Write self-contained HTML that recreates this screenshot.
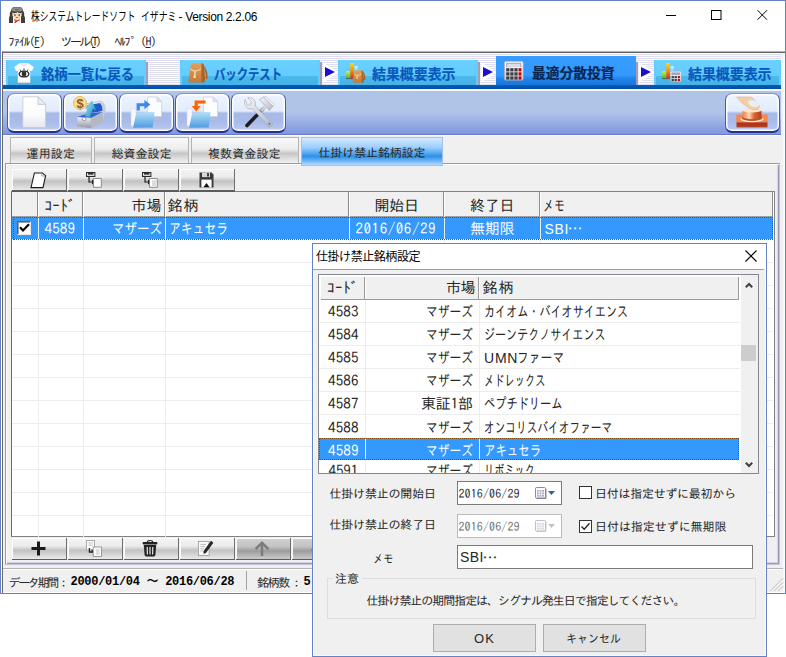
<!DOCTYPE html>
<html lang="ja">
<head>
<meta charset="utf-8">
<title>株システムトレードソフト イザナミ</title>
<style>
*{box-sizing:border-box;margin:0;padding:0}
html,body{width:786px;height:657px;overflow:hidden;background:#fff}
body{position:relative;font-family:"Liberation Sans","IPAGothic","Noto Sans CJK JP",sans-serif;font-size:13px;color:#000}
.a{position:absolute}
.t{position:absolute;white-space:nowrap;line-height:1}
.ui{font-family:"Liberation Sans","Noto Sans CJK JP",sans-serif}
.go{font-family:"IPAGothic","Noto Sans CJK JP",sans-serif;color:#262626}
.lgo{font-family:"Liberation Sans","IPAGothic",sans-serif;color:#262626}
.mono{font-family:"Liberation Mono","IPAGothic",monospace}
.w{color:#fff}
.bk{font-family:"Liberation Sans","Noto Sans CJK JP",sans-serif;font-weight:700;color:#0858bc;-webkit-text-stroke:0.2px currentColor}

svg{position:absolute;overflow:visible}
/* main window */
#win{position:absolute;left:0;top:0;width:786px;height:594px;background:#fff;border:1px solid #6482c4}
#client{position:absolute;left:2px;top:51px;width:783px;height:542px;background:#f0f0f0;border-left:1px solid #686868;border-top:1px solid #b4b4b4;box-shadow:inset 0 1px 0 #646464,inset -1.5px 0 0 #fff,inset 0 -1px 0 #fff}
#strip{position:absolute;left:3px;top:53px;width:778px;height:32px;background:repeating-linear-gradient(180deg,#fbfbfd 0,#fbfbfd 1px,#dedeec 1px,#dedeec 2px)}
.tab{position:absolute;top:60px;height:25px;background:linear-gradient(180deg,#6ad0ff 0,#64ccff 62%,#4cb9ea 66%,#46b2e6 100%);box-shadow:inset 2px 0 0 #66ccff,inset -2px 0 0 #66ccff}
.tab.on{top:56px;height:29px;background:linear-gradient(180deg,#379dff 0,#3399ff 66%,#2183ea 78%,#1876dc 100%);box-shadow:none}
.tsh{position:absolute;top:62px;width:2px;height:23px;background:#a39eb4}
#bluebar{position:absolute;left:3px;top:85px;width:778px;height:4px;background:linear-gradient(180deg,#0a5cbc,#004ca8)}
#tool{position:absolute;left:3px;top:89px;width:778px;height:47px;background:linear-gradient(180deg,#f8f6f6 0,#f8f6f6 2px,#b0c4e8 2px,#b0c4e8 23px,#8098e0 44.5px,#6a7ac4 44.5px,#6a7ac4 46px,#fbfbfb 46px)}
.tb{position:absolute;top:93px;width:55px;height:40px;border-radius:7px;border:1px solid #4a5aa8;border-top-color:#7e92d0;border-bottom:2px solid #26328a;background:linear-gradient(180deg,#eef4ff 0,#e2ecfd 46%,#a6b9e7 52%,#a9bbe9 75%,#bccaf2 100%);box-shadow:inset 0 0 0 1.5px #fff}
.arrow{position:absolute;top:66.5px;width:0;height:0;border-left:10px solid #1a10d0;border-top:5.5px solid transparent;border-bottom:5.5px solid transparent}
.arrbg{position:absolute;top:62px;width:15px;height:21px;background:#fff;clip-path:polygon(0 0,100% 50%,0 100%)}
/* sub tabs */
.stab{position:absolute;top:137px;height:26px;border:1px solid #b4b4b4;border-bottom:none;background:linear-gradient(180deg,#fafafa 0,#ececec 45%,#c6c6c6 62%,#dcdcdc 80%,#f2f2f2 100%)}
.stab.on{height:29px;border:1px solid #9ec4ea;background:linear-gradient(180deg,#d4eaff 0,#9dcefc 35%,#2d90e8 68%,#6db6f6 85%,#b4dcff 100%)}
#panel{position:absolute;left:5px;top:163px;width:775px;height:402px;background:#f0f0f0;border:1px solid #c4c4d8;border-top-color:#9696ba;border-left-color:#9696ba;box-shadow:inset 1px 1px 0 #fff,inset -1px -1px 0 #9c9cb8,inset -2px -2px 0 #d4d4e2}
.mb{position:absolute;height:22px;width:55px;border-right:1px solid #707070;border-bottom:2px solid #5c5c5c;box-shadow:inset 1px 1px 0 #fcfcfc;background:linear-gradient(180deg,#f4f4f4 0,#ececec 38%,#c2c2c2 58%,#d2d2d2 76%,#eaeaea 100%)}
.mb.dis{background:linear-gradient(180deg,#d0d0d0 0,#c4c4c4 40%,#9c9c9c 62%,#b0b0b0 78%,#cacaca 100%)}
/* grid */
#grid{position:absolute;left:11px;top:191px;width:764px;height:346px;background:#fff;border:1px solid #828282;border-left-color:#696969}
.vl{position:absolute;width:1px;background:#a0a0a0}
.hl{position:absolute;height:1px;background:#ededed}
.vg{position:absolute;width:1px;background:#ededed}
/* dialog */
#dlg{position:absolute;left:312px;top:243px;width:455px;height:414px;background:#f0f0f0;border:1px solid #6482c4;box-shadow:inset -1px 0 0 #fafaf6,inset 1px 0 0 #fafaf6,inset 0 -1px 0 #fafaf6}
#dtitle{position:absolute;left:313px;top:244px;width:453px;height:25px;background:#fff}
#list{position:absolute;left:318px;top:274px;width:441px;height:200px;background:#fff;border:1px solid #828790}
.inp{position:absolute;background:#fff;border:1px solid #7a7a7a}
.btn{position:absolute;background:#e1e1e1;border:1px solid #adadad}
.cb{position:absolute;width:13px;height:13px;background:#fff;border:1px solid #333}
</style>
</head>
<body>
<div id="win"></div>
<div id="client"></div>
<div id="strip"></div>
<div id="bluebar"></div>
<div id="tool"></div>
<!-- top tabs -->
<div class="tab" style="left:6px;width:140px"></div>
<div class="tab" style="left:180px;width:140px"></div>
<div class="tab" style="left:338px;width:140px"></div>
<div class="tab on" style="left:496px;width:140px"></div>
<div class="tab" style="left:654px;width:127px"></div>
<div class="tsh" style="left:146px"></div><div class="tsh" style="left:320px"></div><div class="tsh" style="left:478px"></div><div class="tsh" style="left:636px"></div>
<div class="arrbg" style="left:323px"></div><div class="arrow" style="left:325px"></div>
<div class="arrbg" style="left:481px"></div><div class="arrow" style="left:483px"></div>
<div class="arrbg" style="left:639px"></div><div class="arrow" style="left:641px"></div>
<!-- toolbar buttons -->
<div class="tb" style="left:6.5px"></div>
<div class="tb" style="left:62.5px"></div>
<div class="tb" style="left:118.5px"></div>
<div class="tb" style="left:174.5px"></div>
<div class="tb" style="left:230.5px"></div>
<div class="tb" style="left:724.5px"></div>
<!-- sub tabs -->
<div id="panel"></div>
<div class="stab" style="left:10px;width:82px"></div>
<div class="stab" style="left:94px;width:95px"></div>
<div class="stab" style="left:191px;width:108px"></div>
<div class="stab on" style="left:301px;width:142px"></div>
<!-- grid -->
<div id="grid"></div>
<div class="a" style="left:12px;top:192px;width:761px;height:25px;background:#f0f0f0;border-bottom:1px solid #a0a0a0"></div>
<div class="a" style="left:12px;top:217px;width:761px;height:22px;background:#3399ff"></div>
<div class="vl" style="left:37px;top:192px;height:25px;width:2px;background:linear-gradient(90deg,#8c8c8c 50%,#fff 50%)"></div>
<div class="vl" style="left:82px;top:192px;height:25px;width:2px;background:linear-gradient(90deg,#8c8c8c 50%,#fff 50%)"></div>
<div class="vl" style="left:164px;top:192px;height:25px;width:2px;background:linear-gradient(90deg,#8c8c8c 50%,#fff 50%)"></div>
<div class="vl" style="left:348px;top:192px;height:25px;width:2px;background:linear-gradient(90deg,#8c8c8c 50%,#fff 50%)"></div>
<div class="vl" style="left:443px;top:192px;height:25px;width:2px;background:linear-gradient(90deg,#8c8c8c 50%,#fff 50%)"></div>
<div class="vl" style="left:539px;top:192px;height:25px;width:2px;background:linear-gradient(90deg,#8c8c8c 50%,#fff 50%)"></div>
<div class="vl" style="left:772px;top:192px;height:25px;background:#8c8c8c"></div>
<div class="hl" style="left:12px;top:262px;width:761px"></div>
<div class="hl" style="left:12px;top:285px;width:761px"></div>
<div class="hl" style="left:12px;top:308px;width:761px"></div>
<div class="hl" style="left:12px;top:331px;width:761px"></div>
<div class="hl" style="left:12px;top:354px;width:761px"></div>
<div class="hl" style="left:12px;top:377px;width:761px"></div>
<div class="hl" style="left:12px;top:400px;width:761px"></div>
<div class="hl" style="left:12px;top:423px;width:761px"></div>
<div class="hl" style="left:12px;top:446px;width:761px"></div>
<div class="hl" style="left:12px;top:469px;width:761px"></div>
<div class="hl" style="left:12px;top:492px;width:761px"></div>
<div class="hl" style="left:12px;top:515px;width:761px"></div>
<div class="vg" style="left:38px;top:240px;height:297px"></div>
<div class="vg" style="left:83px;top:240px;height:297px"></div>
<div class="vg" style="left:165px;top:240px;height:297px"></div>
<div class="vg" style="left:349px;top:240px;height:297px"></div>
<div class="vg" style="left:444px;top:240px;height:297px"></div>
<div class="vg" style="left:540px;top:240px;height:297px"></div>
<div class="a" style="left:13px;top:217px;width:760px;height:23px;outline:1px dotted #7a4c18;outline-offset:-1px"></div>
<div class="a" style="left:38px;top:218px;width:1px;height:21px;background:#e6f0ff"></div>
<div class="a" style="left:83px;top:218px;width:1px;height:21px;background:#e6f0ff"></div>
<div class="a" style="left:165px;top:218px;width:1px;height:21px;background:#e6f0ff"></div>
<div class="a" style="left:349px;top:218px;width:1px;height:21px;background:#e6f0ff"></div>
<div class="a" style="left:444px;top:218px;width:1px;height:21px;background:#e6f0ff"></div>
<div class="a" style="left:540px;top:218px;width:1px;height:21px;background:#e6f0ff"></div>
<!-- mini toolbar -->
<div class="mb" style="left:12px;top:169px;height:23px"></div>
<div class="mb" style="left:68px;top:169px;height:23px"></div>
<div class="mb" style="left:124px;top:169px;height:23px"></div>
<div class="mb" style="left:180px;top:169px;height:23px"></div>
<!-- bottom buttons -->
<div class="mb" style="left:12px;top:538px;height:21.5px;border-bottom-width:1.5px"></div>
<div class="mb" style="left:68px;top:538px;height:21.5px;border-bottom-width:1.5px"></div>
<div class="mb" style="left:124px;top:538px;height:21.5px;border-bottom-width:1.5px"></div>
<div class="mb" style="left:180px;top:538px;height:21.5px;border-bottom-width:1.5px"></div>
<div class="mb dis" style="left:236px;top:538px;height:21.5px;border-bottom-width:1.5px"></div>
<div class="mb dis" style="left:292px;top:538px;height:21.5px;border-bottom-width:1.5px"></div>
<!-- status bar -->
<div class="a" style="left:3px;top:568px;width:780px;height:2px;background:linear-gradient(180deg,#b4b4b4 0,#b4b4b4 50%,#fff 50%)"></div>
<div class="a" style="left:246px;top:571px;width:1px;height:19px;background:#a0a0a0"></div>

<!-- mini toolbar icons -->
<svg style="left:30px;top:172px" width="18" height="17" viewBox="0 0 18 17"><path d="M4.4 1 L12.4 1 L15.6 3.6 L13 15.6 L1 15.6 Z" fill="#fff" stroke="#1a1a1a" stroke-width="1.1"/><path d="M12 1.4 L11.6 4 L15 4" fill="none" stroke="#888" stroke-width="0.7"/></svg>
<svg style="left:86px;top:172px" width="16" height="16" viewBox="0 0 16 16"><rect x="0.5" y="0.5" width="8.4" height="4" fill="#d8d8e0" stroke="#2a2a2a" stroke-width="1"/><rect x="2" y="1" width="5.4" height="1.6" fill="#333"/><path d="M3 5 L3 10 L7 10" fill="none" stroke="#222" stroke-width="1.2"/><path d="M6 7.6 L9.4 10 L6 12.4 Z" fill="#222"/><rect x="7.6" y="6.6" width="7.6" height="8.6" fill="#fff" stroke="#777" stroke-width="0.8"/></svg>
<svg style="left:142px;top:172px" width="16" height="16" viewBox="0 0 16 16"><rect x="0.5" y="0.5" width="8.4" height="4" fill="#d8d8e0" stroke="#2a2a2a" stroke-width="1"/><rect x="2" y="1" width="5.4" height="1.6" fill="#333"/><path d="M3 5 L3 10 L7 10" fill="none" stroke="#222" stroke-width="1.2"/><path d="M6 7.6 L9.4 10 L6 12.4 Z" fill="#222"/><rect x="7.6" y="6.6" width="7.6" height="8.6" fill="#fff" stroke="#777" stroke-width="0.8"/><path d="M10 9 L14 9 M10 11 L14 11 M10 13 L14 13" stroke="#aaa" stroke-width="0.8"/></svg>
<svg style="left:199px;top:172px" width="15" height="16" viewBox="0 0 15 16"><path d="M0.5 0.5 L12.6 0.5 L14.5 2.4 L14.5 15.5 L0.5 15.5 Z" fill="#3a3a3a"/><rect x="3" y="0.5" width="8" height="4.6" fill="#d8d8dc"/><rect x="8" y="1.2" width="2" height="3.2" fill="#3a3a3a"/><rect x="2.4" y="7.6" width="10.2" height="7.9" fill="#fff"/><path d="M4.4 15.2 L7.5 11 L10.6 15.2 Z" fill="#111"/></svg>
<!-- grid checkbox -->
<div class="a" style="left:17px;top:221px;width:14px;height:14px;background:#fff;border:1px solid #e8e8e8;border-top-color:#606060;border-left-color:#606060;box-shadow:inset 1px 1px 0 #a0a0a0"></div>
<svg style="left:19px;top:223px" width="11" height="10" viewBox="0 0 11 10"><path d="M1 4.2 L4 7.4 L10 1.2" fill="none" stroke="#000" stroke-width="2.2"/></svg>
<!-- bottom icons -->
<svg style="left:31px;top:541px" width="15" height="15" viewBox="0 0 15 15"><path d="M7.5 0.5 L7.5 14.5 M0.5 7.5 L14.5 7.5" stroke="#1a1a1a" stroke-width="3"/></svg>
<svg style="left:86px;top:540px" width="16" height="17" viewBox="0 0 16 17"><rect x="0.5" y="0.5" width="8" height="9.6" fill="#fafafa" stroke="#999" stroke-width="0.8"/><path d="M2.4 3 L6.6 3 M2.4 5 L6.6 5" stroke="#b4b4b4" stroke-width="0.8"/><path d="M3.4 8 L3.4 12 L7 12" fill="none" stroke="#222" stroke-width="1.3"/><path d="M5.6 9 L9.6 12.6 L5.6 12.6 Z" fill="#222"/><rect x="7.2" y="7" width="8.2" height="9.4" fill="#fafafa" stroke="#888" stroke-width="0.8"/><path d="M10 10 L13.6 10 M10 12 L13.6 12 M10 14 L13.6 14" stroke="#b4b4b4" stroke-width="0.8"/></svg>
<svg style="left:142px;top:540px" width="16" height="17" viewBox="0 0 16 17"><path d="M5.4 2 Q5.4 0.5 8 0.5 Q10.6 0.5 10.6 2" fill="none" stroke="#222" stroke-width="1.2"/><rect x="0.6" y="2" width="14.8" height="2.4" rx="0.8" fill="#222"/><path d="M1.8 5 L14.2 5 L13.4 15 Q13.2 16.4 11.8 16.4 L4.2 16.4 Q2.8 16.4 2.6 15 Z" fill="#222"/><path d="M5.2 7 L5.4 14.4 M8 7 L8 14.4 M10.8 7 L10.6 14.4" stroke="#e8e8e8" stroke-width="1.2"/></svg>
<svg style="left:198px;top:540px" width="16" height="17" viewBox="0 0 16 17"><rect x="0.5" y="1.5" width="10.6" height="14" fill="#fafafa" stroke="#999" stroke-width="0.8"/><path d="M2.4 4.4 L8 4.4 M2.4 6.6 L7 6.6 M2.4 8.8 L6 8.8 M2.4 11 L5 11" stroke="#aaa" stroke-width="0.8"/><path d="M13 0.8 L15.4 2.8 L8 13 L5.2 14.2 L5.6 11 Z" fill="#2a2a2a"/><path d="M5.2 14.2 L5.45 12.4 L6.8 13.5 Z" fill="#ddd"/></svg>
<svg style="left:254px;top:541px" width="16" height="16" viewBox="0 0 16 16"><path d="M8 2 L8 15" stroke="#7c7c7c" stroke-width="2.6"/><path d="M1.6 8.2 L8 1.8 L14.4 8.2" fill="none" stroke="#7c7c7c" stroke-width="2.6"/></svg>
<svg style="left:310px;top:541px" width="16" height="16" viewBox="0 0 16 16"><path d="M8 1 L8 14" stroke="#7c7c7c" stroke-width="2.6"/><path d="M1.6 7.8 L8 14.2 L14.4 7.8" fill="none" stroke="#7c7c7c" stroke-width="2.6"/></svg>
<svg style="left:770px;top:578px" width="13" height="13" viewBox="0 0 13 13"><path d="M0.5 13 L13 0.5 M4.5 13 L13 4.5 M8.5 13 L13 8.5" stroke="#a8a8a8" stroke-width="1"/><path d="M1.5 13 L13 1.5 M5.5 13 L13 5.5 M9.5 13 L13 9.5" stroke="#fff" stroke-width="0.8"/></svg>
<!-- dialog -->
<div id="dlg"></div>
<div id="dtitle"></div>
<div id="list"></div>

<!-- list header -->
<div class="a" style="left:321px;top:277px;width:418px;height:23px;background:#f0f0f0;border-bottom:1px solid #9a9a9a;border-right:1px solid #9a9a9a"></div>
<div class="vl" style="left:364px;top:277px;height:22px;width:2px;background:linear-gradient(90deg,#9a9a9a 50%,#fff 50%)"></div>
<div class="vl" style="left:478px;top:277px;height:22px;width:2px;background:linear-gradient(90deg,#9a9a9a 50%,#fff 50%)"></div>
<!-- list rows lines -->
<div class="hl" style="left:319px;top:322px;width:421px"></div>
<div class="hl" style="left:319px;top:345px;width:421px"></div>
<div class="hl" style="left:319px;top:368px;width:421px"></div>
<div class="hl" style="left:319px;top:391px;width:421px"></div>
<div class="hl" style="left:319px;top:414px;width:421px"></div>
<div class="vg" style="left:365px;top:300px;height:173px"></div>
<div class="vg" style="left:479px;top:300px;height:173px"></div>
<div class="a" style="left:319px;top:438px;width:420px;height:22px;background:#3399ff;outline:1px dotted #7a4c18;outline-offset:-1px"></div>
<div class="a" style="left:365px;top:439px;width:1px;height:20px;background:#e6f0ff"></div>
<div class="a" style="left:479px;top:439px;width:1px;height:20px;background:#e6f0ff"></div>
<div class="a" style="left:319px;top:460px;width:421px;height:13px;overflow:hidden">
<div class="t go" style="left:9.5px;top:3px;font-size:15px;letter-spacing:-0.1px">4591</div>
<div class="t go" style="left:106.5px;top:3px;font-size:15px;transform:scaleX(0.783);transform-origin:0 50%">マザーズ</div>
<div class="t go" style="left:165px;top:3px;font-size:15px;transform:scaleX(0.68);transform-origin:0 50%">リボミック</div>
</div>
<!-- scrollbar -->
<div class="a" style="left:741px;top:275px;width:17px;height:198px;background:#f0f0f0"></div>
<div class="a" style="left:741px;top:345px;width:15px;height:16px;background:#cdcdcd"></div>
<svg style="left:745px;top:282px" width="8" height="6" viewBox="0 0 8 6"><path d="M0.8 5.2 L4 2 L7.2 5.2" fill="none" stroke="#404040" stroke-width="2"/></svg>
<svg style="left:745px;top:462px" width="8" height="6" viewBox="0 0 8 6"><path d="M0.8 0.8 L4 4 L7.2 0.8" fill="none" stroke="#404040" stroke-width="2"/></svg>
<!-- close X -->
<svg style="left:745px;top:250px" width="12" height="12" viewBox="0 0 12 12"><path d="M0.5 0.5 L11.5 11.5 M11.5 0.5 L0.5 11.5" stroke="#000" stroke-width="1.1"/></svg>
<div class="a" style="left:313px;top:269px;width:451px;height:1px;background:#a0a0a0"></div>
<!-- form -->
<div class="inp" style="left:457px;top:481px;width:105px;height:24px"></div>
<div class="inp" style="left:457px;top:514px;width:105px;height:24px;border-color:#bcbcbc"></div>
<div class="inp" style="left:457px;top:545px;width:296px;height:24px"></div>
<div class="cb" style="left:579px;top:486px"></div>
<div class="cb" style="left:579px;top:520px"></div>
<svg style="left:579px;top:520px" width="13" height="13" viewBox="0 0 13 13"><path d="M2.5 6.5 L5.2 9.3 L10.5 3.2" fill="none" stroke="#222" stroke-width="1.3"/></svg>
<!-- calendar icons -->
<svg style="left:535px;top:487px" width="22" height="12" viewBox="0 0 22 12"><rect x="1.5" y="1.5" width="10" height="10.5" rx="1" fill="#8a8a96"/><rect x="0.5" y="0.5" width="10" height="10.5" rx="1" fill="#fafafc" stroke="#80808c" stroke-width="0.9"/><rect x="2" y="3" width="7" height="6.6" fill="#a8aec4"/><path d="M2 5.2 L9 5.2 M2 7.4 L9 7.4 M4.3 3 L4.3 9.6 M6.7 3 L6.7 9.6" stroke="#fafafc" stroke-width="0.7"/><path d="M13 4 L20 4 L16.5 8 Z" fill="#3a5a9a"/></svg>
<svg style="left:535px;top:520px" width="22" height="12" viewBox="0 0 22 12"><rect x="1.5" y="1.5" width="10" height="10.5" rx="1" fill="#d0d0d6"/><rect x="0.5" y="0.5" width="10" height="10.5" rx="1" fill="#fcfcfd" stroke="#b8b8c0" stroke-width="0.9"/><rect x="2" y="3" width="7" height="6.6" fill="#d6d8e2"/><path d="M2 5.2 L9 5.2 M2 7.4 L9 7.4 M4.3 3 L4.3 9.6 M6.7 3 L6.7 9.6" stroke="#fcfcfd" stroke-width="0.7"/><path d="M13 4 L20 4 L16.5 8 Z" fill="#c4c4c4"/></svg>
<!-- groupbox -->
<div class="a" style="left:327px;top:578px;width:429px;height:41px;border:1px solid #dcdcdc"></div>
<div class="a" style="left:333px;top:572px;width:29px;height:12px;background:#f0f0f0"></div>
<!-- buttons -->
<div class="btn" style="left:433px;top:624px;width:103px;height:28px"></div>
<div class="btn" style="left:543px;top:624px;width:103px;height:28px"></div>

<!-- ICONS -->
<!-- title icon -->
<svg style="left:9px;top:7px" width="16" height="16" viewBox="0 0 16 16">
<path d="M4.4 0 L11.8 0 Q13.8 1 14 3.6 Q15.4 5.5 15.2 8.5 L16 11 L16 16 L12 16 L12 6 L4 6 L4 16 L0 16 L0 11 L0.8 8.5 Q0.6 5.5 2 3.6 Q2.2 1 4.4 0 Z" fill="#3e3e3e"/>
<path d="M4.6 0.2 L11.6 0.2 Q13.4 1.2 13.6 3.4 Q11 5.2 8 4.2 Q5 5.2 2.4 3.4 Q2.8 1.2 4.6 0.2 Z" fill="#8e8e8e"/>
<path d="M5.4 1.6 Q8 3.4 10.8 1.6 Q9 3.8 8 3.6 Q7 3.8 5.4 1.6 Z" fill="#5c5c5c"/>
<path d="M3.2 5.4 Q3 9.6 5 11.4 Q8 13.4 11 11.4 Q13 9.6 12.8 5.4 Q10.4 7.2 8.6 5 Q6 7.2 3.2 5.4 Z" fill="#f6dcb4"/>
<path d="M3.2 5.4 Q3.1 8 3.8 9.6 L4.6 6.4 Z M12.8 5.4 Q12.9 8 12.2 9.6 L11.4 6.4 Z" fill="#d89858"/>
<rect x="5.2" y="7.2" width="1.3" height="1.9" fill="#3a3a3a"/><rect x="9.6" y="7.2" width="1.3" height="1.9" fill="#3a3a3a"/>
<rect x="4.2" y="7.4" width="1" height="1.5" fill="#fff"/><rect x="10.9" y="7.4" width="1" height="1.5" fill="#fff"/>
<ellipse cx="8" cy="10.5" rx="1" ry="0.6" fill="#e02030"/>
<path d="M4.2 12.6 L8 13.4 L11.8 12.6 L12 16 L4 16 Z" fill="#fafafa"/>
<path d="M5.2 12 L8 13.6 L10.8 12 L10.6 13.4 L8.6 14.2 L6.4 16 L5 15.6 L6.8 13.8 L5.2 13.2 Z" fill="#e01818"/>
<path d="M7 12.2 L9 12.2 L8 13.4 Z" fill="#f0c890"/>
</svg>
<!-- window controls -->
<svg style="left:666px;top:15px" width="11" height="2" viewBox="0 0 11 2"><rect x="0" y="0" width="10" height="1" fill="#000"/></svg>
<svg style="left:711px;top:10px" width="11" height="11" viewBox="0 0 11 11"><rect x="0.5" y="0.5" width="9.5" height="9" fill="none" stroke="#000" stroke-width="1"/></svg>
<svg style="left:757px;top:10px" width="10.5" height="10" viewBox="0 0 11 11"><path d="M0.3 0.3 L10.7 10.7 M10.7 0.3 L0.3 10.7" stroke="#000" stroke-width="1.1"/></svg>
<!-- tab1 t-shirt -->
<svg style="left:14px;top:63px" width="20" height="20" viewBox="0 0 20 20">
<path d="M5.5 0.2 L14.5 0.2 L20 4.2 L17.8 8.2 L16.2 7.2 L16.2 20 L3.8 20 L3.8 7.2 L2.2 8.2 L0 4.2 Z" fill="#fdfdff"/>
<path d="M6.6 0.4 Q10 4.4 13.4 0.4" fill="none" stroke="#d0d0da" stroke-width="0.9"/>
<ellipse cx="10" cy="11" rx="4.8" ry="2.9" fill="#fff" stroke="#2a2a2a" stroke-width="1.4"/>
<circle cx="10" cy="11" r="2.4" fill="#2e2e2e"/>
<path d="M10 5.2 L10 8 M6 6.6 L7 8.4 M14 6.6 L13 8.4" stroke="#333" stroke-width="0.8"/>
<rect x="4.2" y="18.6" width="11.6" height="1.4" fill="#e4dcdc"/>
</svg>
<!-- tab2 backpack -->
<svg style="left:188px;top:63px" width="20" height="20" viewBox="0 0 20 20">
<defs><linearGradient id="bp" x1="0" y1="0" x2="0" y2="1"><stop offset="0" stop-color="#e3a25c"/><stop offset="1" stop-color="#c47a34"/></linearGradient></defs>
<path d="M15 3 Q19.5 8 18.5 16" fill="none" stroke="#a8642a" stroke-width="1.8"/>
<path d="M3 1.5 Q3.5 0 5.5 0 L13 0 Q15.5 0 16 2.5 L17 17 Q17 19.5 14.5 19.5 L2.5 19.5 Q0 19.5 0.3 17 Z" fill="url(#bp)"/>
<path d="M13.5 0 Q15.8 0.3 16 2.5 L17 17 Q17 19.5 14.5 19.5 L13.5 19.5 Z" fill="#a9642a"/>
<path d="M2.6 6 Q5 8.5 7.4 7.6 Q10 8.5 12.8 5.6" fill="none" stroke="#f3d2a6" stroke-width="1.1"/>
<path d="M7.2 7.6 L6.6 13.6" stroke="#f3d2a6" stroke-width="1.6"/>
<rect x="5.6" y="12.6" width="2.2" height="2.4" rx="0.6" fill="#f6dcb8"/>
</svg>
<!-- tab3 chart+backpack -->
<svg style="left:346px;top:62px" width="20" height="22" viewBox="0 0 20 22">
<defs>
<linearGradient id="g1" x1="0" y1="0" x2="0" y2="1"><stop offset="0" stop-color="#e6f020"/><stop offset="1" stop-color="#30c030"/></linearGradient>
<linearGradient id="g2" x1="0" y1="0" x2="0" y2="1"><stop offset="0" stop-color="#ffe000"/><stop offset="0.5" stop-color="#ff8c00"/><stop offset="1" stop-color="#e02810"/></linearGradient>
<linearGradient id="g3" x1="0" y1="0" x2="0" y2="1"><stop offset="0" stop-color="#d8f4ff"/><stop offset="1" stop-color="#48a8f0"/></linearGradient>
</defs>
<rect x="0.3" y="9" width="3.4" height="7.4" fill="url(#g1)"/>
<rect x="4.3" y="1" width="3.6" height="15.4" fill="url(#g2)"/>
<rect x="8.6" y="4" width="3" height="10" fill="url(#g3)"/>
<rect x="0" y="16.2" width="9" height="0.9" fill="#5a5a4a"/>
<path d="M16.6 10 Q19.2 13 18.6 18" fill="none" stroke="#a8642a" stroke-width="1.3"/>
<path d="M8.4 9.5 Q8.8 8.2 10.2 8.2 L15.4 8.2 Q17 8.4 17.3 10 L18 19 Q18 20.8 16.4 20.8 L8 20.8 Q6.4 20.8 6.6 19 Z" fill="url(#bp)"/>
<path d="M15.6 8.3 Q17 8.6 17.3 10 L18 19 Q18 20.8 16.4 20.8 L15.6 20.8 Z" fill="#a9642a"/>
<path d="M8.2 12.2 Q10 13.8 11.4 13.2 Q13 13.8 15.2 12" fill="none" stroke="#f3d2a6" stroke-width="0.9"/>
<path d="M11.3 13.2 L10.9 17" stroke="#f3d2a6" stroke-width="1.2"/>
</svg>
<!-- tab4 calculator -->
<svg style="left:504px;top:61px" width="20" height="20" viewBox="0 0 20 20">
<defs><linearGradient id="cb" x1="0" y1="0" x2="0" y2="1"><stop offset="0" stop-color="#ffffff"/><stop offset="1" stop-color="#c8c8d2"/></linearGradient></defs>
<rect x="0.3" y="0.3" width="19" height="19" rx="1.6" fill="url(#cb)" stroke="#9a9aa8" stroke-width="0.6"/>
<rect x="2.2" y="1.8" width="15" height="4.2" fill="#a4a4ba"/>
<rect x="3.2" y="2.8" width="13" height="3.2" fill="#dcdce8"/>
<g fill="#3e3e3e"><rect x="2.2" y="7.2" width="3.2" height="3.2"/><rect x="6.3" y="7.2" width="3.2" height="3.2"/><rect x="10.4" y="7.2" width="3.2" height="3.2"/>
<rect x="2.2" y="11.3" width="3.2" height="3.2"/><rect x="6.3" y="11.3" width="3.2" height="3.2"/><rect x="10.4" y="11.3" width="3.2" height="3.2"/>
<rect x="2.2" y="15.4" width="3.2" height="3.2"/><rect x="6.3" y="15.4" width="3.2" height="3.2"/><rect x="10.4" y="15.4" width="3.2" height="3.2"/></g>
<g fill="#c40000"><rect x="14.6" y="7.2" width="2.8" height="3.2"/><rect x="14.6" y="11.3" width="2.8" height="3.2"/><rect x="14.6" y="15.4" width="2.8" height="3.2"/></g>
</svg>
<!-- tab5 chart+calc -->
<svg style="left:662px;top:62px" width="20" height="22" viewBox="0 0 20 22">
<rect x="0.3" y="9" width="3.4" height="7.4" fill="url(#g1)"/>
<rect x="4.3" y="1" width="3.6" height="15.4" fill="url(#g2)"/>
<rect x="8.6" y="4" width="3" height="10" fill="url(#g3)"/>
<rect x="0" y="16.2" width="9" height="0.9" fill="#5a5a4a"/>
<rect x="8.3" y="9.3" width="11" height="10.8" rx="1" fill="url(#cb)" stroke="#9a9aa8" stroke-width="0.5"/>
<rect x="9.4" y="10.4" width="8.8" height="2.6" fill="#a4a4ba"/>
<g fill="#3e3e3e"><rect x="9.6" y="14" width="2.2" height="2.2"/><rect x="12.6" y="14" width="2.2" height="2.2"/><rect x="9.6" y="17" width="2.2" height="2.2"/><rect x="12.6" y="17" width="2.2" height="2.2"/></g>
<g fill="#c40000"><rect x="15.9" y="14" width="2" height="2.2"/><rect x="15.9" y="17" width="2" height="2.2"/></g>
</svg>

<!-- toolbar icons -->

<!-- 1 page -->
<svg style="left:22px;top:96px" width="25" height="33" viewBox="0 0 25 33">
<defs><linearGradient id="pg" x1="0" y1="0" x2="0" y2="1"><stop offset="0" stop-color="#ffffff"/><stop offset="0.6" stop-color="#fbfbfd"/><stop offset="1" stop-color="#e4e6ee"/></linearGradient></defs>
<path d="M0.8 0.8 L16 0.8 L23.6 8.4 L23.6 31.6 L0.8 31.6 Z" fill="url(#pg)" stroke="#c4c8d4" stroke-width="0.8"/>
<path d="M16 0.8 L16 8.4 L23.6 8.4 Z" fill="#eceef4" stroke="#b8bcc8" stroke-width="0.7"/>
</svg>
<!-- 2 chest -->
<svg style="left:73px;top:95px" width="34" height="34" viewBox="0 0 34 34">
<defs>
<linearGradient id="ch" x1="0" y1="0" x2="0" y2="1"><stop offset="0" stop-color="#f0f2f6"/><stop offset="1" stop-color="#9498a8"/></linearGradient>
<linearGradient id="ar" x1="0" y1="0" x2="1" y2="1"><stop offset="0" stop-color="#a0ecf4"/><stop offset="1" stop-color="#1c88b4"/></linearGradient>
</defs>
<path d="M12 9 L28 6 Q33 9 32 17 L16 20 Z" fill="#e8eaf0" stroke="#b0b4c0" stroke-width="0.6"/>
<path d="M14 10.5 L27 8 Q30 11 29.6 16 L17 18.5 Z" fill="#1c5cd0"/>
<path d="M28 6 Q33 9 32 17 L30 26 L29.6 16 Q30 10 27 8 Z" fill="#c8ccd6"/>
<path d="M4 22 L16 18 L30 17 L30 27 L18 33 L4 31 Z" fill="url(#ch)"/>
<path d="M4 22 L16 18 L30 17 L18 23 Z" fill="#2a64d8"/>
<path d="M4 22 L18 23 L18 33 L4 31 Z" fill="url(#ch)" stroke="#a4a8b4" stroke-width="0.4"/>
<path d="M18 23 L30 17 L30 27 L18 33 Z" fill="#b4b8c4"/>
<rect x="9.6" y="22.4" width="3.2" height="3" rx="0.8" fill="#fff" stroke="#666" stroke-width="0.6"/>
<path d="M12 21 L15 13 L12.6 13.4 L19 6 L22.6 15 L20 13.6 L16.6 22 Z" fill="url(#ar)" stroke="#48a8c8" stroke-width="0.4"/>
<circle cx="7" cy="8" r="6.4" fill="#f8e0a0" stroke="#e8b848" stroke-width="1"/>
<text x="7" y="12.6" text-anchor="middle" font-family="Liberation Sans,sans-serif" font-weight="bold" font-size="13" fill="#9a5a10">$</text>
</svg>
<!-- 3 folder blue arrow -->
<svg style="left:130px;top:96px" width="34" height="33" viewBox="0 0 34 33">
<defs>
<linearGradient id="fo" x1="0" y1="0" x2="0" y2="1"><stop offset="0" stop-color="#b4e0fa"/><stop offset="1" stop-color="#4f9be0"/></linearGradient>
</defs>
<path d="M17.5 1 L27 1 L31.6 5.6 L31.6 20.6 L17.5 20.6 Z" fill="#fdfdfe" stroke="#c8ccd6" stroke-width="0.7"/>
<path d="M27 1 L27 5.6 L31.6 5.6 Z" fill="#e4e6ee" stroke="#b8bcc8" stroke-width="0.5"/>
<path d="M1 12.6 L6 12.6 L6 30 L3.4 31.4 L1 29 Z" fill="#f8f8fa" stroke="#d0d4dc" stroke-width="0.5"/>
<path d="M6.4 17 L24.6 15.8 L22.6 31.6 L3 31.8 Z" fill="url(#fo)"/>
<path d="M6.6 14.6 L6.6 7.2 L14.4 7.2 L14.4 4 L20.4 8.6 L14.4 13.2 L14.4 10.2 L9.8 10.2 L9.8 14.6 Z" fill="#3f86ee"/>
</svg>
<!-- 4 folder orange arrow -->
<svg style="left:186px;top:96px" width="34" height="33" viewBox="0 0 34 33">
<path d="M17.5 1 L27 1 L31.6 5.6 L31.6 20.6 L17.5 20.6 Z" fill="#fdfdfe" stroke="#c8ccd6" stroke-width="0.7"/>
<path d="M27 1 L27 5.6 L31.6 5.6 Z" fill="#e4e6ee" stroke="#b8bcc8" stroke-width="0.5"/>
<path d="M1 12.6 L6 12.6 L6 30 L3.4 31.4 L1 29 Z" fill="#f8f8fa" stroke="#d0d4dc" stroke-width="0.5"/>
<path d="M6.4 17 L24.6 15.8 L22.6 31.6 L3 31.8 Z" fill="url(#fo)"/>
<path d="M19.6 4.6 L8.6 4.6 L8.6 10 L5.6 10 L10.2 15.6 L14.8 10 L11.8 10 L11.8 7.6 L19.6 7.6 Z" fill="#ff6200"/>
</svg>
<!-- 5 tools -->
<svg style="left:242px;top:96px" width="34" height="33" viewBox="0 0 34 33">
<defs><linearGradient id="sv" x1="0" y1="0" x2="1" y2="1"><stop offset="0" stop-color="#f8f8fc"/><stop offset="1" stop-color="#b4b8c4"/></linearGradient></defs>
<path d="M20.5 13.5 L5 29.5" stroke="#1c1c1c" stroke-width="3.6" stroke-linecap="round"/>
<path d="M19 15 L23 11" stroke="#c8ccd4" stroke-width="3.2"/>
<path d="M17.6 3.6 L21.6 1.2 L31 10 L27.4 14.4 Z" fill="url(#sv)" stroke="#9a9ea8" stroke-width="0.6"/>
<path d="M21.6 1.2 L24 0.6 L32.4 8.4 L31 10 Z" fill="#f4f4f8" stroke="#a4a8b0" stroke-width="0.5"/>
<path d="M3 3.4 Q1 8 4.6 11.6 Q7 13.6 10.4 12.8 L24.4 27.6 Q24.6 30.6 27.4 31 Q30.4 30.6 30.6 27.6 Q30.2 24.8 27.2 24.6 L13.4 9.8 Q14.4 6 11.6 3.2 Q9 1 5.6 1.6 L9.4 5.6 L8.4 8.8 L5.6 9.4 Z" fill="url(#sv)" stroke="#a0a4b0" stroke-width="0.6"/>
<circle cx="27.4" cy="27.8" r="1.2" fill="#5a86c8"/>
</svg>
<!-- 6 finger button -->
<svg style="left:735px;top:96px" width="34" height="33" viewBox="0 0 34 33">
<defs>
<linearGradient id="ob" x1="0" y1="0" x2="1" y2="0"><stop offset="0" stop-color="#f08040"/><stop offset="0.35" stop-color="#ffd8b8"/><stop offset="0.6" stop-color="#e06830"/><stop offset="1" stop-color="#b03c18"/></linearGradient>
<linearGradient id="ob2" x1="0" y1="0" x2="0" y2="1"><stop offset="0" stop-color="#f89860"/><stop offset="0.55" stop-color="#f07038"/><stop offset="0.7" stop-color="#a03420"/><stop offset="1" stop-color="#b84020"/></linearGradient>
</defs>
<path d="M1.5 18.6 L32.5 18.6 L32.5 31.4 L1.5 31.4 Z" fill="url(#ob2)"/>
<path d="M1.5 18.6 L32.5 18.6 L32.5 26 L1.5 26 Z" fill="#f48850"/>
<ellipse cx="17" cy="23" rx="11.6" ry="3.2" fill="#fff0e4"/>
<ellipse cx="17" cy="22" rx="10.6" ry="3" fill="#c85028"/>
<path d="M7.6 14.4 L26.4 14.4 L26.4 21.4 Q17 25 7.6 21.4 Z" fill="url(#ob)"/>
<ellipse cx="17" cy="14.4" rx="9.4" ry="2" fill="#ffe4cc"/>
<path d="M1.6 1 L16.4 1 Q21 5 23.6 8 Q25.4 11.4 23 13.6 Q18.6 14.6 13.6 12 Q6 7 1.6 1 Z" fill="#f2cfa4" stroke="#d8ae84" stroke-width="0.5"/>
<ellipse cx="18.6" cy="7.6" rx="5.6" ry="3.2" transform="rotate(18 18.6 7.6)" fill="#e8eef8"/>
</svg>
<div class="t ui" style="left:30.5px;top:10.5px;font-size:12px;transform:scaleX(0.7274);transform-origin:0 50%;">株システムトレードソフト</div>
<div class="t ui" style="left:140.5px;top:10.5px;font-size:12px;transform:scaleX(0.7393);transform-origin:0 50%;">イザナミ</div>
<div class="t ui" style="left:178.5px;top:10.5px;font-size:12px;letter-spacing:-0.34px;">- Version 2.2.06</div>
<div class="t go" style="left:8.5px;top:35.0px;font-size:12px;letter-spacing:-0.83px;">ﾌｧｲﾙ(<u>F</u>)</div>
<div class="t go" style="left:60.5px;top:35.0px;font-size:12px;letter-spacing:-2.60px;">ツール(<u>T</u>)</div>
<div class="t go" style="left:114.5px;top:35.0px;font-size:12px;letter-spacing:-1.00px;">ﾍﾙﾌﾟ (<u>H</u>)</div>
<div class="t bk" style="left:40.5px;top:66.5px;font-size:14px;transform:scaleX(0.9490);transform-origin:0 50%;">銘柄一覧に戻る</div>
<div class="t bk" style="left:214.0px;top:66.5px;font-size:14px;transform:scaleX(0.8095);transform-origin:0 50%;">バックテスト</div>
<div class="t bk" style="left:372.0px;top:66.5px;font-size:14px;transform:scaleX(0.9940);transform-origin:0 50%;">結果概要表示</div>
<div class="t bk" style="left:531.5px;top:65.5px;font-size:14px;transform:scaleX(0.9821);transform-origin:0 50%;color:#08264f;">最適分散投資</div>
<div class="t bk" style="left:688.0px;top:66.5px;font-size:14px;transform:scaleX(0.9940);transform-origin:0 50%;">結果概要表示</div>
<div class="t go" style="left:26.5px;top:146.5px;font-size:12px;letter-spacing:0.17px;">運用設定</div>
<div class="t go" style="left:111.5px;top:146.5px;font-size:12px;letter-spacing:0.00px;">総資金設定</div>
<div class="t go" style="left:208.0px;top:146.5px;font-size:12px;letter-spacing:0.10px;">複数資金設定</div>
<div class="t go" style="left:318.5px;top:146.0px;font-size:12px;letter-spacing:-0.12px;">仕掛け禁止銘柄設定</div>
<div class="t go" style="left:44.5px;top:197.5px;font-size:15px;letter-spacing:0.33px;">ｺｰﾄﾞ</div>
<div class="t go" style="left:131.5px;top:197.5px;font-size:15px;letter-spacing:0.00px;">市場</div>
<div class="t go" style="left:167.5px;top:197.5px;font-size:15px;letter-spacing:1.00px;">銘柄</div>
<div class="t go" style="left:374.5px;top:197.5px;font-size:15px;letter-spacing:-0.25px;">開始日</div>
<div class="t go" style="left:470.0px;top:197.5px;font-size:15px;letter-spacing:-0.25px;">終了日</div>
<div class="t go" style="left:542.5px;top:197.5px;font-size:15px;transform:scaleX(0.7333);transform-origin:0 50%;">メモ</div>
<div class="t go w" style="left:44.5px;top:221.0px;font-size:15px;letter-spacing:0.17px;">4589</div>
<div class="t go w" style="left:111.5px;top:221.0px;font-size:15px;transform:scaleX(0.8333);transform-origin:0 50%;">マザーズ</div>
<div class="t go w" style="left:168.5px;top:221.0px;font-size:15px;transform:scaleX(0.7867);transform-origin:0 50%;">アキュセラ</div>
<div class="t go w" style="left:355.5px;top:221.0px;font-size:15px;letter-spacing:0.56px;">2016/06/29</div>
<div class="t go w" style="left:470.0px;top:221.0px;font-size:15px;letter-spacing:-0.25px;">無期限</div>
<div class="t lgo w" style="left:544.5px;top:221.5px;font-size:14px;letter-spacing:0.71px;">SBI</div>
<div class="t go w" style="left:567.5px;top:221.0px;font-size:15px;letter-spacing:-1.00px;">…</div>
<div class="t go" style="left:8.5px;top:576.0px;font-size:12px;letter-spacing:-2.33px;">データ期間 :</div>
<div class="t mono" style="left:70.5px;top:576.0px;font-size:12px;letter-spacing:-0.29px;font-weight:bold;">2000/01/04 ～ 2016/06/28</div>
<div class="t go" style="left:257.0px;top:576.0px;font-size:12px;letter-spacing:-1.38px;">銘柄数 :</div>
<div class="t mono" style="left:303.5px;top:576.0px;font-size:12px;letter-spacing:0.80px;font-weight:bold;">5</div>
<div class="t ui" style="left:316.0px;top:251.0px;font-size:12px;letter-spacing:-0.44px;">仕掛け禁止銘柄設定</div>
<div class="t go" style="left:327.0px;top:280.0px;font-size:15px;letter-spacing:0.50px;">ｺｰﾄﾞ</div>
<div class="t go" style="left:446.0px;top:280.0px;font-size:15px;letter-spacing:-0.50px;">市場</div>
<div class="t go" style="left:482.5px;top:280.0px;font-size:15px;letter-spacing:1.00px;">銘柄</div>
<div class="t go" style="left:328.0px;top:304.0px;font-size:15px;letter-spacing:0.17px;">4583</div>
<div class="t go" style="left:425.5px;top:304.0px;font-size:15px;transform:scaleX(0.7833);transform-origin:0 50%;">マザーズ</div>
<div class="t go" style="left:484.0px;top:304.0px;font-size:15px;transform:scaleX(0.7390);transform-origin:0 50%;">カイオム・バイオサイエンス</div>
<div class="t go" style="left:328.0px;top:327.1px;font-size:15px;letter-spacing:0.17px;">4584</div>
<div class="t go" style="left:425.5px;top:327.1px;font-size:15px;transform:scaleX(0.7833);transform-origin:0 50%;">マザーズ</div>
<div class="t go" style="left:484.0px;top:327.1px;font-size:15px;transform:scaleX(0.7364);transform-origin:0 50%;">ジーンテクノサイエンス</div>
<div class="t go" style="left:328.0px;top:350.2px;font-size:15px;letter-spacing:0.17px;">4585</div>
<div class="t go" style="left:425.5px;top:350.2px;font-size:15px;transform:scaleX(0.7833);transform-origin:0 50%;">マザーズ</div>
<div class="t lgo" style="left:484.0px;top:350.7px;font-size:14px;letter-spacing:0.80px;">UMN</div>
<div class="t go" style="left:517.0px;top:350.2px;font-size:15px;transform:scaleX(0.7867);transform-origin:0 50%;">ファーマ</div>
<div class="t go" style="left:328.0px;top:373.3px;font-size:15px;letter-spacing:0.17px;">4586</div>
<div class="t go" style="left:425.5px;top:373.3px;font-size:15px;transform:scaleX(0.7833);transform-origin:0 50%;">マザーズ</div>
<div class="t go" style="left:484.0px;top:373.3px;font-size:15px;transform:scaleX(0.6833);transform-origin:0 50%;">メドレックス</div>
<div class="t go" style="left:328.0px;top:396.4px;font-size:15px;letter-spacing:0.17px;">4587</div>
<div class="t go" style="left:421.0px;top:396.4px;font-size:15px;letter-spacing:-0.17px;">東証1部</div>
<div class="t go" style="left:484.0px;top:396.4px;font-size:15px;transform:scaleX(0.7476);transform-origin:0 50%;">ペプチドリーム</div>
<div class="t go" style="left:328.0px;top:419.5px;font-size:15px;letter-spacing:0.17px;">4588</div>
<div class="t go" style="left:425.5px;top:419.5px;font-size:15px;transform:scaleX(0.7833);transform-origin:0 50%;">マザーズ</div>
<div class="t go" style="left:484.0px;top:419.5px;font-size:15px;transform:scaleX(0.7122);transform-origin:0 50%;">オンコリスバイオファーマ</div>
<div class="t go w" style="left:328.0px;top:442.6px;font-size:15px;letter-spacing:0.17px;">4589</div>
<div class="t go w" style="left:425.5px;top:442.6px;font-size:15px;transform:scaleX(0.7833);transform-origin:0 50%;">マザーズ</div>
<div class="t go w" style="left:484.0px;top:442.6px;font-size:15px;transform:scaleX(0.7613);transform-origin:0 50%;">アキュセラ</div>
<div class="t go" style="left:329.5px;top:486.5px;font-size:12px;letter-spacing:-0.19px;">仕掛け禁止の開始日</div>
<div class="t go" style="left:329.5px;top:518.0px;font-size:12px;letter-spacing:-0.19px;">仕掛け禁止の終了日</div>
<div class="t go" style="left:372.5px;top:551.5px;font-size:12px;transform:scaleX(0.8542);transform-origin:0 50%;">メモ</div>
<div class="t go" style="left:458.5px;top:487.0px;font-size:12px;letter-spacing:0.11px;">2016/06/29</div>
<div class="t go" style="left:458.5px;top:520.0px;font-size:12px;letter-spacing:0.11px;color:#6d6d6d;">2016/06/29</div>
<div class="t lgo" style="left:460.0px;top:550.0px;font-size:14px;letter-spacing:0.46px;">SBI</div>
<div class="t go" style="left:482.5px;top:549.5px;font-size:15px;letter-spacing:-1.00px;">…</div>
<div class="t go" style="left:595.0px;top:486.5px;font-size:12px;letter-spacing:-0.27px;">日付は指定せずに最初から</div>
<div class="t go" style="left:595.0px;top:520.0px;font-size:12px;letter-spacing:-0.05px;">日付は指定せずに無期限</div>
<div class="t go" style="left:335.0px;top:571.5px;font-size:12px;letter-spacing:0.00px;">注意</div>
<div class="t go" style="left:366.5px;top:593.5px;font-size:12px;letter-spacing:-1.04px;">仕掛け禁止の期間指定は、シグナル発生日で指定してください。</div>
<div class="t lgo" style="left:474.0px;top:631.5px;font-size:13px;letter-spacing:1.20px;">OK</div>
<div class="t go" style="left:566.0px;top:632.0px;font-size:12px;transform:scaleX(0.9167);transform-origin:0 50%;">キャンセル</div>
</body>
</html>
